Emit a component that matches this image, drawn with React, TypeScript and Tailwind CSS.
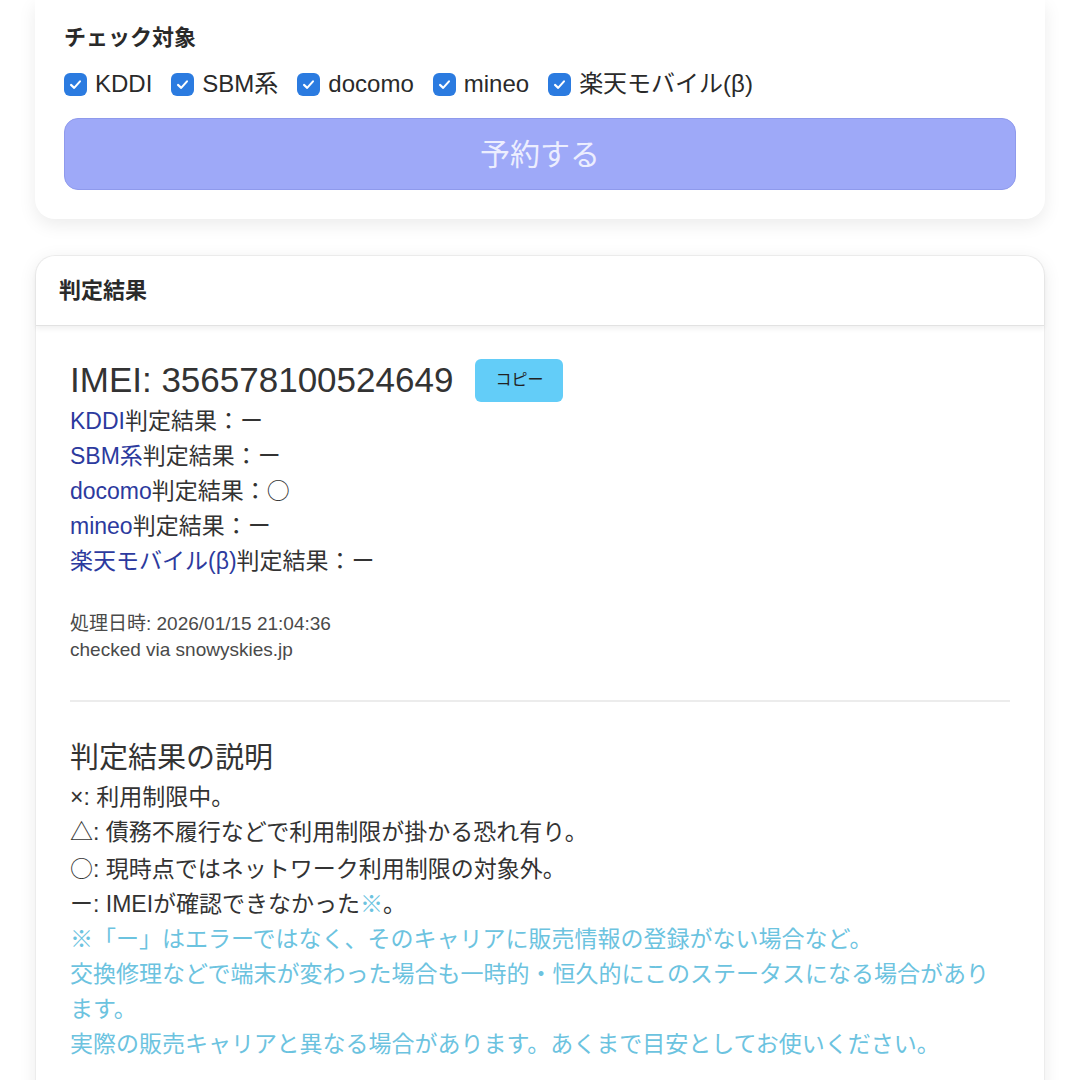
import React from "react";

const font = { fontFamily: '"Liberation Sans", "Noto Sans CJK JP", sans-serif' };
const cjk = { fontFamily: '"Noto Sans CJK JP", sans-serif' };

function Check({ label }: { label: string }) {
  return (
    <label className="flex items-center gap-[8px]">
      <span className="flex h-[23px] w-[23px] items-center justify-center rounded-[6px] bg-[#2b7be0]">
        <svg width="15" height="15" viewBox="0 0 16 16" fill="none">
          <path d="M3.2 8.4 L6.6 11.6 L12.8 4.6" stroke="white" strokeWidth="2.2" strokeLinecap="round" strokeLinejoin="round" />
        </svg>
      </span>
      <span className="text-[24px] leading-[34px] text-[#2a2a2a]">{label}</span>
    </label>
  );
}

function Result({ name, value }: { name: string; value: string }) {
  return (
    <div className="h-[35px] text-[23px] leading-[35px] text-[#333]">
      <span className="text-[#2c3a9e]">{name}</span>判定結果：<span style={cjk}>{value}</span>
    </div>
  );
}

export default function App() {
  return (
    <div className="min-h-[1080px] w-[1080px] overflow-hidden bg-white" style={font}>
      <div className="px-[35px]">
        <div className="rounded-b-[20px] bg-white px-[29px] pb-[29px] pt-[23px] shadow-[0_6px_18px_rgba(0,0,0,0.08)]">
          <div className="text-[22px] font-bold leading-[30px] text-[#2a2a2a]">チェック対象</div>
          <div className="mt-[14px] flex items-center gap-[19px]">
            <Check label="KDDI" />
            <Check label="SBM系" />
            <Check label="docomo" />
            <Check label="mineo" />
            <Check label="楽天モバイル(β)" />
          </div>
          <button className="mt-[17px] flex h-[72px] w-full items-center justify-center rounded-[14px] border border-[#8f9aec] bg-[#9ea9f8] text-[30px] text-[#eceefe]">
            予約する
          </button>
        </div>

        <div className="mt-[36px] rounded-t-[20px] border border-b-0 border-[#ececec] bg-white shadow-[0_4px_18px_rgba(0,0,0,0.08)]">
          <div className="flex h-[70px] items-center rounded-t-[20px] border-b border-[#e2e2e2] px-[23px] shadow-[0_3px_5px_rgba(0,0,0,0.06)]">
            <span className="text-[22px] font-bold text-[#2a2a2a]">判定結果</span>
          </div>
          <div className="px-[34px] pb-[40px] pt-[32px]">
            <div className="flex h-[44px] items-center gap-[22px]">
              <span className="text-[35px] leading-[44px] text-[#333]">IMEI: 356578100524649</span>
              <button className="flex h-[43px] w-[88px] items-center justify-center rounded-[6px] bg-[#63cdf8] text-[16px] text-[#222]">
                コピー
              </button>
            </div>
            <Result name="KDDI" value="ー" />
            <Result name="SBM系" value="ー" />
            <Result name="docomo" value="○" />
            <Result name="mineo" value="ー" />
            <Result name="楽天モバイル(β)" value="ー" />

            <div className="mt-[34px] text-[19px] leading-[26px] text-[#4a4a4a]">
              <div>処理日時: 2026/01/15 21:04:36</div>
              <div>checked via snowyskies.jp</div>
            </div>

            <div className="mt-[37px] h-[2px] bg-[#ececec]" />

            <div className="mt-[36px] text-[29px] leading-[40px] text-[#333]">判定結果の説明</div>
            <div className="mt-[2px] text-[23px] leading-[35px] text-[#333]">
              <div>×: 利用制限中。</div>
              <div>△: 債務不履行などで利用制限が掛かる恐れ有り。</div>
              <div>
                <span style={cjk}>○</span>: 現時点ではネットワーク利用制限の対象外。
              </div>
              <div>
                ー: IMEIが確認できなかった<span className="text-[#6cc3df]">※</span>。
              </div>
              <div className="text-[#6cc3df]">
                <div>※「ー」はエラーではなく、そのキャリアに販売情報の登録がない場合など。</div>
                <div>交換修理などで端末が変わった場合も一時的・恒久的にこのステータスになる場合があります。</div>
                <div>実際の販売キャリアと異なる場合があります。あくまで目安としてお使いください。</div>
              </div>
            </div>
          </div>
        </div>
      </div>
    </div>
  );
}
